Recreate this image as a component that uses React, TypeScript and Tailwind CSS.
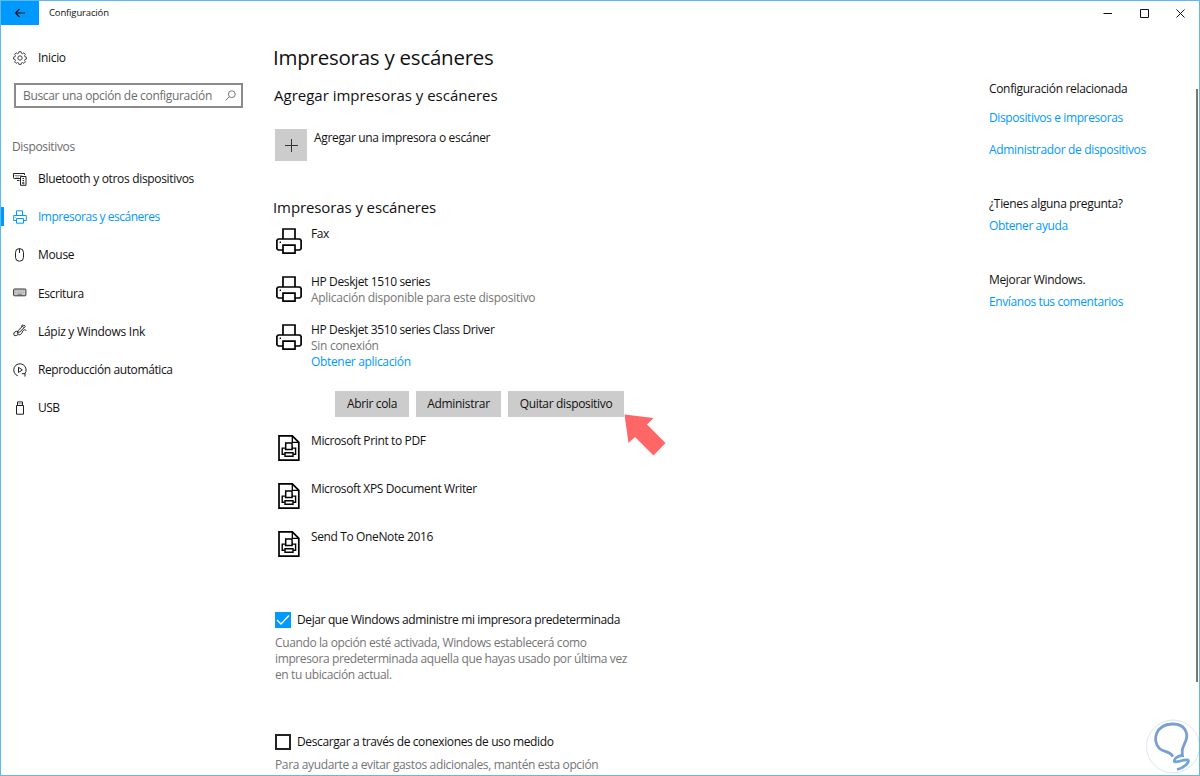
import type { ReactNode } from 'react';

interface NavItem {
  label: string;
  icon: ReactNode;
  active?: boolean;
  tracking?: string;
}

function GearIcon() {
  return (
    <svg width="14" height="14" viewBox="0 0 14 14" fill="none" stroke="#333" strokeWidth="0.9">
      <path d="M5.9 0.7h2.2l.4 1.6 1 .4 1.4-.9 1.5 1.5-.9 1.4.4 1 1.5.4v2l-1.5.4-.4 1 .9 1.4-1.5 1.5-1.4-.9-1 .4-.4 1.5H5.9l-.4-1.5-1-.4-1.4.9-1.5-1.5.9-1.4-.4-1L.6 8.1v-2l1.5-.4.4-1-.9-1.4 1.5-1.5 1.4.9 1-.4z" />
      <circle cx="7" cy="7" r="2.2" />
    </svg>
  );
}

function DevicesIcon() {
  return (
    <svg width="14" height="14" viewBox="0 0 14 14" fill="none" stroke="#222">
      <path d="M7 6.5H1.2Q.5 6.5 .5 5.8V1.5H11.5V3" />
      <path d="M1.5 3.5H9M2.5 5H6" stroke="#999" />
      <path d="M4 8.5H6.5" />
      <path d="M7.5 4.5h5.5v8.8H7.5z" fill="#fff" />
      <path d="M9.5 6.5h1.5M9.5 8.5h1.5" />
      <circle cx="10.3" cy="11" r="0.8" />
    </svg>
  );
}

function SmallPrinterIcon() {
  return (
    <svg width="14" height="14" viewBox="0 0 14 14" fill="none" stroke="#0099ff">
      <path d="M3.5 5.5V.8h6v4.7" />
      <path d="M3.5 10.5H.7V5.5h12.6v5H10.5" />
      <path d="M3.5 8.5h7v4.7h-7z" />
      <path d="M2.2 7.2h1" strokeWidth="0.8" />
    </svg>
  );
}

function MouseIcon() {
  return (
    <svg width="14" height="14" viewBox="0 0 14 14" fill="none" stroke="#222">
      <rect x="2.5" y="0.6" width="8" height="12.6" rx="3.8" />
      <path d="M6.5 .6V5" />
    </svg>
  );
}

function KeyboardIcon() {
  return (
    <svg width="14" height="14" viewBox="0 0 14 14" fill="none" stroke="#333">
      <rect x="0.6" y="3" width="12.3" height="6.8" rx="0.8" fill="#ccc" />
      <path d="M2 5h9.5M2 6.7h9.5" stroke="#aaa" strokeDasharray="1 0.6" />
      <path d="M4.5 8.3h4.5" stroke="#777" />
    </svg>
  );
}

function PenIcon() {
  return (
    <svg width="14" height="14" viewBox="0 0 14 14" fill="none" stroke="#222">
      <path d="M4.3 9.5l1-3L10.8.9l1.5 1.5L6.8 8z" />
      <path d="M9.5 2.2l1.5 1.5M8 2.5L9.8.8" />
      <path d="M5 7.5C2.5 6.8.5 8.5.7 10.3.9 12 3.2 12 4.2 11 5.5 9.8 6 11.5 7.8 10.3 9.5 9 9.3 7.2 10.5 6.2c1-.8 2.5-.5 2.6.6" />
    </svg>
  );
}

function AutoplayIcon() {
  return (
    <svg width="14" height="14" viewBox="0 0 14 14" fill="none" stroke="#222">
      <path d="M4.8 12.8A6.2 6.2 0 1 1 11.8 10.8" />
      <path d="M8.8 10.7h3.2v2.9" />
      <path d="M5.5 4.3v5.2L9.3 6.9z" />
    </svg>
  );
}

function UsbIcon() {
  return (
    <svg width="14" height="14" viewBox="0 0 14 14" fill="none" stroke="#222">
      <path d="M4.5 4.5V.9h5v3.6" />
      <path d="M3.5 4.5h7v8.7h-7z" />
      <path d="M5.8 2.7h.8M7.7 2.7h.8" />
    </svg>
  );
}

function PrinterIcon() {
  return (
    <svg width="26" height="26" viewBox="0 0 26 26" fill="none" stroke="#000" strokeWidth="1.7">
      <path d="M7 11V1h12v10" />
      <path d="M7 22H2.2L.9 20.7V12.3L2.2 11h21.6l1.3 1.3v8.4L23.8 22H19" />
      <path d="M7 17.2h12v8H7z" />
      <path d="M3.6 14.2h1.4" strokeWidth="1.4" />
    </svg>
  );
}

function DocumentPrinterIcon() {
  return (
    <svg width="22" height="26" viewBox="0 0 22 26" fill="none" stroke="#000" strokeWidth="1.7">
      <path d="M1 .9h13.3L20.8 7.3v17.8H1z" />
      <path d="M14.3 .9V7.4h6.5" strokeWidth="1.3" />
      <path d="M7.7 14.6V8h5.6l.8 1v5.6z" strokeWidth="1.5" />
      <path d="M6.8 19.3H4.2v-6.2h3.5M14.1 13.1h3.5v6.2h-2.4" strokeWidth="1.4" />
      <path d="M7 17.7h8v3.5H7z" strokeWidth="1.4" />
    </svg>
  );
}

const NAV_ITEMS: NavItem[] = [
  { label: 'Bluetooth y otros dispositivos', icon: <DevicesIcon />, tracking: 'tracking-[-0.32px]' },
  { label: 'Impresoras y escáneres', icon: <SmallPrinterIcon />, active: true, tracking: 'tracking-[-0.48px]' },
  { label: 'Mouse', icon: <MouseIcon /> },
  { label: 'Escritura', icon: <KeyboardIcon />, tracking: 'tracking-[-0.4px]' },
  { label: 'Lápiz y Windows Ink', icon: <PenIcon />, tracking: 'tracking-[-0.28px]' },
  { label: 'Reproducción automática', icon: <AutoplayIcon />, tracking: 'tracking-[-0.39px]' },
  { label: 'USB', icon: <UsbIcon />, tracking: 'tracking-[-0.5px]' },
];

function TitleBar() {
  return (
    <header className="flex h-6 shrink-0 items-center">
      <button aria-label="Atrás" className="flex h-6 w-[38px] items-center justify-center bg-[#0099ff]">
        <svg width="12" height="10" viewBox="0 0 12 10" fill="none" stroke="#111" strokeWidth="1.2">
          <path d="M11 5H1.5M5.5 1L1.5 5l4 4" />
        </svg>
      </button>
      <span className="ml-[10px] text-[9.5px] leading-none tracking-[-0.15px]">Configuración</span>
      <div className="ml-auto mr-[14px] flex items-center gap-[27px]">
        <svg width="10" height="9" viewBox="0 0 10 9" stroke="#111">
          <path d="M.5 4.5h8.5" />
        </svg>
        <svg width="9" height="9" viewBox="0 0 9 9" fill="none" stroke="#111">
          <path d="M.5 .5h8v8h-8z" />
        </svg>
        <svg width="9" height="9" viewBox="0 0 9 9" stroke="#111">
          <path d="M.5 .5l8 8M8.5 .5l-8 8" />
        </svg>
      </div>
    </header>
  );
}

function Sidebar() {
  return (
    <nav className="w-[274px] shrink-0">
      <a className="mt-[23px] flex h-5 items-center gap-[11px] pl-3">
        <GearIcon />
        <span>Inicio</span>
      </a>
      <div className="ml-[13px] mt-[15px] flex h-[25px] w-[229px] items-center justify-between border-2 border-[#8a8a8a] pl-[7px] pr-[5px] text-[#6b6b6b]">
        <span>Buscar una opción de configuración</span>
        <svg width="11" height="11" viewBox="0 0 11 11" fill="none" stroke="#777">
          <circle cx="6.8" cy="4.2" r="3.4" />
          <path d="M4.3 6.7L.6 10.4" />
        </svg>
      </div>
      <p className="ml-[11px] mt-[29px] leading-5 tracking-[-0.35px] text-[#6b6b6b]">Dispositivos</p>
      <ul className="mt-[3px]">
        {NAV_ITEMS.map(item => (
          <li key={item.label} className="flex h-[38.2px] items-center">
            <span className={`-mt-px h-[19px] w-[3px] ${item.active ? 'bg-[#0099ff]' : ''}`} />
            <a className={`flex items-center gap-[11px] pl-[9px] ${item.active ? 'text-[#0099ff]' : ''}`}>
              <span className="-mt-px">{item.icon}</span>
              <span className={item.tracking}>{item.label}</span>
            </a>
          </li>
        ))}
      </ul>
    </nav>
  );
}

interface DeviceProps {
  name: string;
  icon: ReactNode;
  status?: string;
  link?: string;
}

function Device({ name, icon, status, link }: DeviceProps) {
  return (
    <div className="flex min-h-12 items-start">
      <span className="flex w-9 shrink-0 justify-center pr-2 pt-[2px]">{icon}</span>
      <div className="flex flex-col">
        <span className="tracking-[-0.37px]">{name}</span>
        {status && <span className="tracking-[-0.28px] text-[#757575]">{status}</span>}
        {link && <a className="text-[#0099ff]">{link}</a>}
      </div>
    </div>
  );
}

function Checkbox({ checked, label }: { checked?: boolean; label: string }) {
  return (
    <label className="flex h-4 items-center gap-[6px]">
      {checked ? (
        <span className="flex size-4 items-center justify-center bg-[#0099ff]">
          <svg width="14" height="12" viewBox="0 0 14 12" fill="none" stroke="#fff" strokeWidth="1.3">
            <path d="M1 6l4 4 8-8.5" />
          </svg>
        </span>
      ) : (
        <span className="size-4 border-2 border-[#222]" />
      )}
      <span className="tracking-[-0.38px]">{label}</span>
    </label>
  );
}

function PrintersPanel() {
  return (
    <main className="w-[714px] shrink-0">
      <h1 className="-ml-[2px] mt-[18px] text-[20.5px] leading-7 tracking-[-0.24px]">Impresoras y escáneres</h1>
      <h2 className="-ml-px mt-[14px] text-[15px] leading-5 tracking-normal">Agregar impresoras y escáneres</h2>
      <button className="mt-6 flex items-start gap-2">
        <span className="flex size-8 items-center justify-center bg-[#cccccc]">
          <svg width="13" height="13" viewBox="0 0 13 13" stroke="#333">
            <path d="M6.5 0v13M0 6.5h13" />
          </svg>
        </span>
        <span className="-ml-px pt-px">Agregar una impresora o escáner</span>
      </button>

      <h2 className="-ml-[2px] mt-9 text-[15px] leading-5 tracking-[-0.1px]">Impresoras y escáneres</h2>
      <div className="mt-[9px]">
        <Device name="Fax" icon={<PrinterIcon />} />
        <Device name="HP Deskjet 1510 series" icon={<PrinterIcon />} status="Aplicación disponible para este dispositivo" />
        <Device
          name="HP Deskjet 3510 series Class Driver"
          icon={<PrinterIcon />}
          status="Sin conexión"
          link="Obtener aplicación"
        />
      </div>
      <div className="relative ml-[60px] mt-[21px] flex gap-[7px]">
        <button className="h-[26px] w-[74px] bg-[#cccccc]">Abrir cola</button>
        <button className="h-[26px] w-[85px] bg-[#cccccc] tracking-[-0.3px]">Administrar</button>
        <button className="h-[26px] w-[116px] bg-[#cccccc]">Quitar dispositivo</button>
        {/* Pointer over the remove button */}
        <svg className="absolute left-[289px] top-[23px]" width="42" height="42" viewBox="0 0 42 42" fill="#ff6666">
          <path d="M.5 .5L29.5 4l-6.5 6.5L41.5 29 29.5 41.5 11 23l-6.5 6z" />
        </svg>
      </div>
      <div className="mt-4">
        <Device name="Microsoft Print to PDF" icon={<DocumentPrinterIcon />} />
        <Device name="Microsoft XPS Document Writer" icon={<DocumentPrinterIcon />} />
        <Device name="Send To OneNote 2016" icon={<DocumentPrinterIcon />} />
      </div>

      <div className="mt-[35px]">
        <Checkbox checked label="Dejar que Windows administre mi impresora predeterminada" />
        <p className="mt-[7px] tracking-[-0.38px] text-[#757575]">
          Cuando la opción esté activada, Windows establecerá como
          <br />
          impresora predeterminada aquella que hayas usado por última vez
          <br />
          en tu ubicación actual.
        </p>
      </div>
      <div className="mt-[51px]">
        <Checkbox label="Descargar a través de conexiones de uso medido" />
        <p className="mt-[7px] tracking-[-0.36px] text-[#757575]">
          Para ayudarte a evitar gastos adicionales, mantén esta opción
        </p>
      </div>
    </main>
  );
}

function RelatedLinks() {
  return (
    <aside className="flex flex-1 flex-col items-start pt-[56px]">
      <h3>Configuración relacionada</h3>
      <a className="mt-[13px] tracking-[-0.38px] text-[#0099ff]">Dispositivos e impresoras</a>
      <a className="mt-4 text-[#0099ff]">Administrador de dispositivos</a>
      <h3 className="mt-[38px]">¿Tienes alguna pregunta?</h3>
      <a className="mt-[6px] tracking-[-0.4px] text-[#0099ff]">Obtener ayuda</a>
      <h3 className="mt-[38px]">Mejorar Windows.</h3>
      <a className="mt-[6px] tracking-[-0.4px] text-[#0099ff]">Envíanos tus comentarios</a>
    </aside>
  );
}

function Watermark() {
  return (
    <svg className="absolute -right-px bottom-0" width="54" height="56" viewBox="0 0 54 56" fill="none">
      <circle cx="27" cy="27.5" r="26.5" stroke="#dbe6f5" />
      <path
        d="M27 37.5C23 31.5 18 33.500 13.500 29.500 6 22.500 9 5.500 26 5 39 4.500 43 14.500 39.500 22.500 37 28 35.500 30.500 36.500 36.500c-4 0-9 3-8 6 1 2 10-3 13.500-1.500 2 2-4 8-11 9.500"
        stroke="#6fa5d8"
        strokeWidth="2.8"
      />
      <path
        d="M27 37.5C23 31.5 18 33.500 13.500 29.500 6 22.500 9 5.500 26 5 39 4.500 43 14.500 39.500 22.500 37 28 35.500 30.500 36.500 36.500"
        stroke="#9a8fcb"
        strokeWidth="0.9"
      />
    </svg>
  );
}

export default function App() {
  return (
    <div className="relative flex h-[776px] w-[1200px] flex-col overflow-hidden border border-[#5cb8fa] bg-white font-['Open_Sans','Noto_Sans',sans-serif] text-[12px] leading-4 tracking-[-0.33px] text-[#111]">
      <TitleBar />
      <div className="flex min-h-0 flex-1">
        <Sidebar />
        <PrintersPanel />
        <RelatedLinks />
        <div className="mr-px mt-16 h-[593px] w-[2px] bg-[#777]" />
      </div>
      <Watermark />
    </div>
  );
}
